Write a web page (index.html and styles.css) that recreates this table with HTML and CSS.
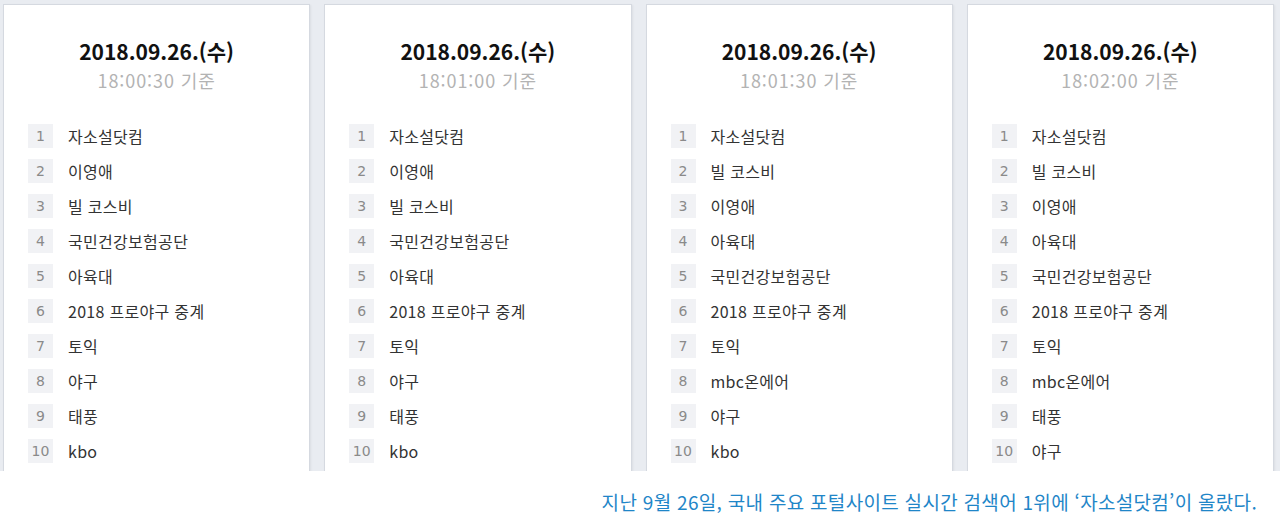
FILE: index.html
```html
<!DOCTYPE html>
<html lang="ko">
<head>
<meta charset="utf-8">
<link rel="stylesheet" href="styles.css">
</head>
<body>
<div class="board">
  <section class="card">
    <h2 class="date">2018.09.26.(수)</h2>
    <p class="time">18:00:30 기준</p>
    <ol class="rank">
      <li><span class="num">1</span><span class="kw">자소설닷컴</span></li>
      <li><span class="num">2</span><span class="kw">이영애</span></li>
      <li><span class="num">3</span><span class="kw">빌 코스비</span></li>
      <li><span class="num">4</span><span class="kw">국민건강보험공단</span></li>
      <li><span class="num">5</span><span class="kw">아육대</span></li>
      <li><span class="num">6</span><span class="kw">2018 프로야구 중계</span></li>
      <li><span class="num">7</span><span class="kw">토익</span></li>
      <li><span class="num">8</span><span class="kw">야구</span></li>
      <li><span class="num">9</span><span class="kw">태풍</span></li>
      <li><span class="num">10</span><span class="kw">kbo</span></li>
    </ol>
  </section>
  <section class="card">
    <h2 class="date">2018.09.26.(수)</h2>
    <p class="time">18:01:00 기준</p>
    <ol class="rank">
      <li><span class="num">1</span><span class="kw">자소설닷컴</span></li>
      <li><span class="num">2</span><span class="kw">이영애</span></li>
      <li><span class="num">3</span><span class="kw">빌 코스비</span></li>
      <li><span class="num">4</span><span class="kw">국민건강보험공단</span></li>
      <li><span class="num">5</span><span class="kw">아육대</span></li>
      <li><span class="num">6</span><span class="kw">2018 프로야구 중계</span></li>
      <li><span class="num">7</span><span class="kw">토익</span></li>
      <li><span class="num">8</span><span class="kw">야구</span></li>
      <li><span class="num">9</span><span class="kw">태풍</span></li>
      <li><span class="num">10</span><span class="kw">kbo</span></li>
    </ol>
  </section>
  <section class="card">
    <h2 class="date">2018.09.26.(수)</h2>
    <p class="time">18:01:30 기준</p>
    <ol class="rank">
      <li><span class="num">1</span><span class="kw">자소설닷컴</span></li>
      <li><span class="num">2</span><span class="kw">빌 코스비</span></li>
      <li><span class="num">3</span><span class="kw">이영애</span></li>
      <li><span class="num">4</span><span class="kw">아육대</span></li>
      <li><span class="num">5</span><span class="kw">국민건강보험공단</span></li>
      <li><span class="num">6</span><span class="kw">2018 프로야구 중계</span></li>
      <li><span class="num">7</span><span class="kw">토익</span></li>
      <li><span class="num">8</span><span class="kw">mbc온에어</span></li>
      <li><span class="num">9</span><span class="kw">야구</span></li>
      <li><span class="num">10</span><span class="kw">kbo</span></li>
    </ol>
  </section>
  <section class="card">
    <h2 class="date">2018.09.26.(수)</h2>
    <p class="time">18:02:00 기준</p>
    <ol class="rank">
      <li><span class="num">1</span><span class="kw">자소설닷컴</span></li>
      <li><span class="num">2</span><span class="kw">빌 코스비</span></li>
      <li><span class="num">3</span><span class="kw">이영애</span></li>
      <li><span class="num">4</span><span class="kw">아육대</span></li>
      <li><span class="num">5</span><span class="kw">국민건강보험공단</span></li>
      <li><span class="num">6</span><span class="kw">2018 프로야구 중계</span></li>
      <li><span class="num">7</span><span class="kw">토익</span></li>
      <li><span class="num">8</span><span class="kw">mbc온에어</span></li>
      <li><span class="num">9</span><span class="kw">태풍</span></li>
      <li><span class="num">10</span><span class="kw">야구</span></li>
    </ol>
  </section>
</div>
<p class="caption">지난 9월 26일, 국내 주요 포털사이트 실시간 검색어 1위에 ‘자소설닷컴’이 올랐다.</p>
</body>
</html>
```

FILE: styles.css
```css
* { box-sizing: border-box; }
html, body {
  margin: 0;
  padding: 0;
  background: #ffffff;
  font-family: "Noto Sans CJK KR", "Noto Sans", sans-serif;
}
.board {
  height: 471px;
  overflow: hidden;
  background: #e9ecf1;
  display: flex;
  gap: 14px;
  padding: 4px 6px 0 3px;
}
.card {
  flex: 1;
  background: #ffffff;
  border: 1px solid #d5d9e0;
  border-bottom: none;
  box-shadow: 1px 1px 2px rgba(0,0,0,0.06);
  padding-top: 30px;
}
.date {
  margin: 0;
  text-align: center;
  font-size: 21px;
  font-weight: 700;
  line-height: 32px;
  color: #111;
  letter-spacing: 0;
}
.time {
  margin: 0;
  text-align: center;
  font-size: 18px;
  line-height: 26px;
  color: #b3b3b3;
  letter-spacing: 0.9px;
}
.rank {
  list-style: none;
  margin: 31px 0 0 0;
  padding: 0 0 0 24px;
  display: flex;
  flex-direction: column;
  gap: 11px;
}
.rank li {
  display: flex;
  align-items: center;
  height: 24px;
}
.num {
  width: 25px;
  height: 24px;
  background: #f1f2f5;
  color: #8a8a8a;
  font-size: 14px;
  display: flex;
  align-items: center;
  justify-content: center;
  font-family: "DejaVu Sans", sans-serif;
}
.kw {
  margin-left: 15px;
  font-size: 16px;
  color: #333;
  letter-spacing: 0.3px;
}
.caption {
  margin: 17px 23px 0 0;
  text-align: right;
  font-size: 19px;
  color: #1f86c8;
  letter-spacing: 0.3px;
}
```
